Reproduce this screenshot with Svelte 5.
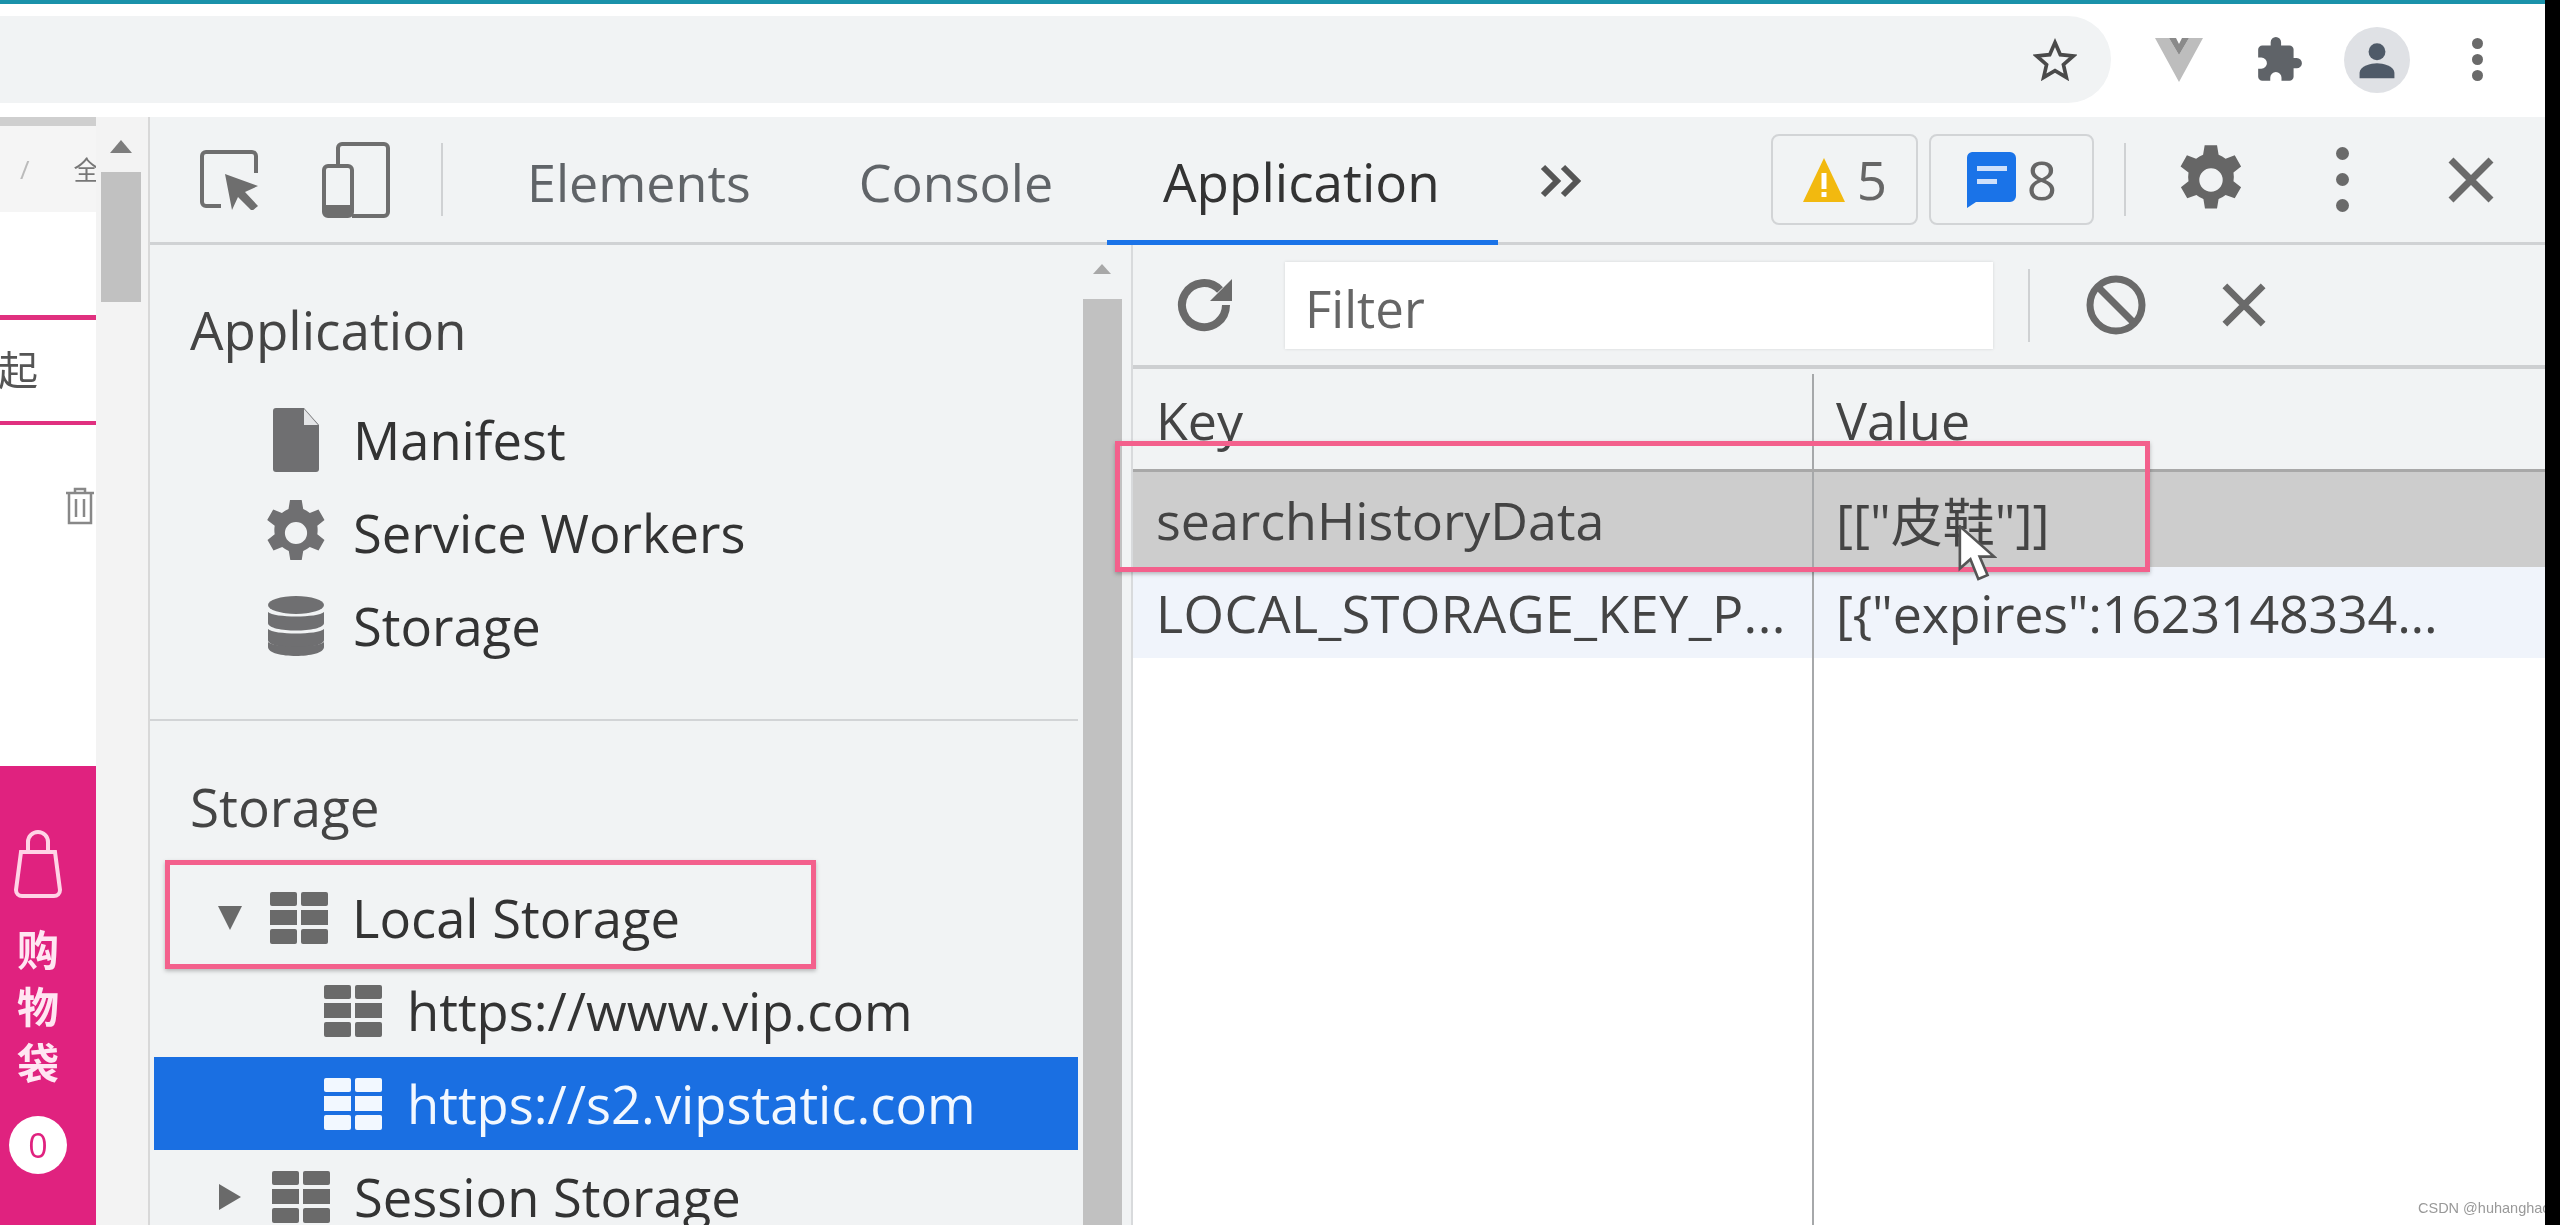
<script>
	const tabs = ['Elements', 'Console', 'Application'];
	const appItems = ['Manifest', 'Service Workers', 'Storage'];
</script>

{#snippet gridIcon()}
	<svg class="grid" viewBox="0 0 58 52">
		<rect x="0" y="0" width="27" height="14" rx="2" />
		<rect x="31" y="0" width="27" height="14" rx="2" />
		<rect x="0" y="18" width="27" height="15" />
		<rect x="31" y="18" width="27" height="15" />
		<rect x="0" y="37" width="27" height="15" rx="2" />
		<rect x="31" y="37" width="27" height="15" rx="2" />
	</svg>
{/snippet}

<div class="screen">
	<div class="window">
		<div class="accent"></div>
		<div class="chrome">
			<div class="omnibox">
				<svg class="star" viewBox="0 0 24 24"><path d="M12 2.500l2.900 6.600 7.100.7-5.400 4.700 1.600 7-6.200-3.700-6.200 3.700 1.600-7L2 9.800l7.100-.7z" /></svg>
			</div>
			<div class="extensions">
				<svg class="vue" viewBox="0 0 48 44">
					<path d="M0 0h14l10 17L34 0h14L24 44z" fill="#bdbdbd" />
					<path d="M14 0h7l3 6 3-6h7L24 17z" fill="#8a8a8a" />
				</svg>
				<svg class="puzzle" viewBox="0 0 24 24"><path d="M20.500 11H19V7a2 2 0 0 0-2-2h-4V3.500a2.500 2.500 0 0 0-5 0V5H4a2 2 0 0 0-2 2v3.800h1.500a2.700 2.700 0 0 1 0 5.400H2V20a2 2 0 0 0 2 2h3.800v-1.500a2.700 2.700 0 0 1 5.400 0V22H17a2 2 0 0 0 2-2v-4h1.500a2.500 2.500 0 0 0 0-5z" /></svg>
				<div class="avatar">
					<svg viewBox="0 0 24 24"><circle cx="12" cy="7.500" r="4.600" /><path d="M2.500 22v-3c0-3.600 6.300-5.200 9.500-5.200s9.500 1.600 9.500 5.200v3z" /></svg>
				</div>
				<div class="dots small"><i></i><i></i><i></i></div>
			</div>
		</div>

		<div class="main">
			<div class="page">
				<div class="page-strip"></div>
				<div class="page-crumbs"><span class="slash">/</span><span class="crumb">全</span></div>
				<div class="page-blank"></div>
				<div class="page-search">
					<span>起</span>
				</div>
				<div class="page-list">
					<svg class="trash" viewBox="0 0 30 38"><path d="M1 6h28M10 6V2h10v4M4 6v30h22V6M11 12v18M19 12v18" /></svg>
				</div>
				<div class="cart">
					<svg class="bag" viewBox="0 0 48 70"><path d="M7 24h34l5 38a6 6 0 0 1-6 6H8a6 6 0 0 1-6-6zM14 24V14a10 10 0 0 1 20 0v10" /></svg>
					<span class="cart-label">购</span>
					<span class="cart-label">物</span>
					<span class="cart-label">袋</span>
					<span class="cart-count">0</span>
				</div>
			</div>

			<div class="page-scroll">
				<span class="arrow up"></span>
				<div class="page-thumb"></div>
			</div>

			<div class="devtools">
				<div class="toolbar">
					<svg class="inspect" viewBox="0 0 60 60">
						<path d="M21 56H6a4 4 0 0 1-4-4V6a4 4 0 0 1 4-4h46a4 4 0 0 1 4 4v17" class="line" />
						<path d="M25 24l33 12-13 6 13 14-6 5-14-14-6 13z" class="solid" />
					</svg>
					<svg class="device" viewBox="0 0 68 76">
						<path d="M16 24V6a4 4 0 0 1 4-4h42a4 4 0 0 1 4 4v64a4 4 0 0 1-4 4H30" class="line" />
						<rect x="2" y="24" width="28" height="50" rx="4" class="line" />
						<rect x="2" y="63" width="28" height="11" class="solid" />
					</svg>
					<div class="sep"></div>
					<div class="tabs">
						{#each tabs as tab}
							<div class="tab" class:active={tab === 'Application'}>{tab}</div>
						{/each}
						<svg class="more" viewBox="0 0 44 36"><path d="M4 4l14 14L4 32M24 4l14 14-14 14" /></svg>
					</div>
					<div class="counters">
						<div class="counter warn">
							<svg viewBox="0 0 44 46">
								<path d="M22 1l21 44H1z" fill="#f2b90f" />
								<rect x="19.500" y="16" width="5" height="16" fill="#fff" />
								<rect x="19.500" y="35" width="5" height="5" fill="#fff" />
							</svg>
							<span>5</span>
						</div>
						<div class="counter msg">
							<svg viewBox="0 0 50 56">
								<path d="M6 0h38a6 6 0 0 1 6 6v38a6 6 0 0 1-6 6H10L1 56V6a6 6 0 0 1 5-6z" fill="#1a73e8" />
								<rect x="11" y="14" width="30" height="5" fill="#cfe0fa" />
								<rect x="11" y="27" width="20" height="5" fill="#cfe0fa" />
							</svg>
							<span>8</span>
						</div>
					</div>
					<div class="sep right"></div>
					<svg class="gear-big" viewBox="0 0 24 24"><path fill-rule="evenodd" d="M13.900 1l.5 3a8.500 8.500 0 0 1 2.200 1.300l2.900-1.100 2 3.500-2.400 1.900a8.500 8.500 0 0 1 0 2.800l2.400 1.900-2 3.500-2.900-1.100a8.500 8.500 0 0 1-2.200 1.300l-.5 3h-3.800l-.5-3a8.500 8.500 0 0 1-2.200-1.300l-2.900 1.100-2-3.500 2.400-1.900a8.500 8.500 0 0 1 0-2.800L2.400 7.700l2-3.500 2.900 1.100a8.500 8.500 0 0 1 2.200-1.300l.5-3zM12 8.300a3.700 3.700 0 1 0 0 7.400 3.700 3.700 0 0 0 0-7.400z" /></svg>
					<div class="dots"><i></i><i></i><i></i></div>
					<svg class="close big" viewBox="0 0 46 46"><path d="M3 3l40 40M43 3L3 43" /></svg>
				</div>

				<div class="panels">
					<aside class="sidebar">
						<h3 class="section first">Application</h3>
						{#each appItems as item}
							<div class="row l1">
								<span class="slot">
									{#if item === 'Manifest'}
										<svg class="doc" viewBox="0 0 46 64"><path d="M3 0h28l15 17v44a3 3 0 0 1-3 3H3a3 3 0 0 1-3-3V3a3 3 0 0 1 3-3z" /><path d="M31 1l14 16H31z" fill="#e4e5e7" /></svg>
									{:else if item === 'Service Workers'}
										<svg class="gear" viewBox="0 0 24 24"><path fill-rule="evenodd" d="M13.900 1l.5 3a8.500 8.500 0 0 1 2.200 1.300l2.900-1.100 2 3.500-2.400 1.900a8.500 8.500 0 0 1 0 2.800l2.400 1.900-2 3.500-2.900-1.100a8.500 8.500 0 0 1-2.200 1.300l-.5 3h-3.800l-.5-3a8.500 8.500 0 0 1-2.200-1.300l-2.900 1.100-2-3.500 2.400-1.900a8.500 8.500 0 0 1 0-2.800L2.400 7.700l2-3.500 2.900 1.100a8.500 8.500 0 0 1 2.200-1.300l.5-3zM12 8.300a3.700 3.700 0 1 0 0 7.400 3.700 3.700 0 0 0 0-7.400z" /></svg>
									{:else}
										<svg class="db" viewBox="0 0 56 60">
											<ellipse cx="28" cy="9" rx="28" ry="9" />
											<path d="M0 16c6 6 50 6 56 0v11c0 10-56 10-56 0z" />
											<path d="M0 33c6 6 50 6 56 0v11c0 10-56 10-56 0z" />
											<path d="M0 46c6 6 50 6 56 0v5c0 12-56 12-56 0z" />
										</svg>
									{/if}
								</span>
								<span>{item}</span>
							</div>
						{/each}
						<div class="divider"></div>
						<h3 class="section">Storage</h3>
						<div class="row l1 marked">
							<span class="tri down"></span>
							<span class="slot">{@render gridIcon()}</span>
							<span>Local Storage</span>
							<div class="callout local"></div>
						</div>
						<div class="row l2">
							<span class="slot">{@render gridIcon()}</span>
							<span>https://www.vip.com</span>
						</div>
						<div class="row l2 selected">
							<span class="slot">{@render gridIcon()}</span>
							<span>https://s2.vipstatic.com</span>
						</div>
						<div class="row l1">
							<span class="tri side"></span>
							<span class="slot">{@render gridIcon()}</span>
							<span>Session Storage</span>
						</div>
					</aside>

					<div class="side-scroll">
						<span class="arrow up small"></span>
						<div class="side-thumb"></div>
					</div>

					<section class="pane">
						<div class="filterbar">
							<svg class="refresh" viewBox="0 0 60 60"><path d="M50 30a22 22 0 1 1-6-15" /><path class="tip" d="M56 4v22H34z" /></svg>
							<div class="filter">Filter</div>
							<div class="sep low"></div>
							<svg class="block" viewBox="0 0 60 60"><circle cx="30" cy="30" r="26" /><path d="M12 12l36 36" /></svg>
							<svg class="close" viewBox="0 0 46 46"><path d="M3 3l40 40M43 3L3 43" /></svg>
						</div>
						<div class="table">
							<div class="tr head"><div class="td key">Key</div><div class="td">Value</div></div>
							<div class="tr picked">
								<div class="td key">searchHistoryData</div>
								<div class="td">[["皮鞋"]]</div>
								<div class="callout keyrow"></div>
								<svg class="cursor" viewBox="0 0 30 44"><path d="M2 1v32l8-7 6 15 7-3-6-14h11z" /></svg>
							</div>
							<div class="tr alt">
								<div class="td key">LOCAL_STORAGE_KEY_P...</div>
								<div class="td">{'[{"expires":1623148334...'}</div>
							</div>
							<div class="rest"><div class="rest-key"></div></div>
						</div>
					</section>
				</div>
			</div>
		</div>
	</div>
	<div class="edge"></div>
	<div class="mark">CSDN @huhanghao</div>
</div>

<style>
	:global(body) {
		margin: 0;
		background: #000;
	}
	.screen {
		position: relative;
		display: flex;
		width: 2560px;
		height: 1225px;
		overflow: hidden;
		font-family: "Open Sans", "Noto Sans CJK SC", sans-serif;
		color: #333;
		background: #fff;
	}
	.window {
		display: flex;
		flex-direction: column;
		flex: 1;
		min-width: 0;
		filter: blur(0.7px);
	}
	.edge {
		width: 15px;
		background: #000;
	}
	.mark {
		position: absolute;
		right: 15px;
		bottom: 9px;
		width: 127px;
		overflow: hidden;
		white-space: nowrap;
		font: 14.5px "Liberation Sans", sans-serif;
		color: #999;
	}

	.accent {
		height: 4px;
		background: #1a92aa;
	}
	.chrome {
		display: flex;
		height: 113px;
		flex: none;
		box-sizing: border-box;
		padding: 12px 0 14px;
		background: #fff;
	}
	.omnibox {
		display: flex;
		align-items: center;
		justify-content: flex-end;
		box-sizing: border-box;
		width: 2111px;
		padding-right: 34px;
		background: #f1f3f4;
		border-radius: 0 43px 43px 0;
	}
	.star {
		width: 44px;
		height: 44px;
		fill: none;
		stroke: #4a4a4a;
		stroke-width: 2;
	}
	.extensions {
		display: flex;
		align-items: center;
		flex: 1;
		padding-left: 44px;
	}
	.vue {
		width: 48px;
		height: 44px;
	}
	.puzzle {
		width: 50px;
		height: 50px;
		margin-left: 51px;
		fill: #5f6368;
	}
	.avatar {
		display: flex;
		align-items: center;
		justify-content: center;
		width: 66px;
		height: 66px;
		margin-left: 40px;
		border-radius: 50%;
		background: #dfe1e5;
	}
	.avatar svg {
		width: 44px;
		height: 44px;
		fill: #4f5a68;
	}
	.dots {
		display: flex;
		flex-direction: column;
		justify-content: space-between;
		width: 13px;
		height: 65px;
		margin-left: 56px;
	}
	.dots i {
		width: 13px;
		height: 13px;
		border-radius: 50%;
		background: #6a6a6a;
	}
	.dots.small {
		width: 11px;
		height: 43px;
		margin-left: 62px;
	}
	.dots.small i {
		width: 11px;
		height: 11px;
	}

	.main {
		display: flex;
		flex: 1;
		min-height: 0;
	}

	.page {
		display: flex;
		flex-direction: column;
		flex: none;
		width: 96px;
		overflow: hidden;
	}
	.page-strip {
		height: 9px;
		background: #cfcfcf;
	}
	.page-crumbs {
		display: flex;
		align-items: center;
		height: 86px;
		padding-left: 20px;
		background: #f5f5f5;
		color: #bbb;
		font-size: 26px;
		white-space: nowrap;
	}
	.crumb {
		margin-left: 44px;
		color: #777;
	}
	.page-blank {
		height: 103px;
		background: #fff;
	}
	.page-search {
		display: flex;
		align-items: center;
		box-sizing: border-box;
		height: 110px;
		border-top: 5px solid #e0307f;
		border-bottom: 4px solid #e0307f;
		font-size: 40px;
		color: #555;
		background: #fff;
	}
	.page-search span {
		margin: -6px 0 0 -2px;
	}
	.page-list {
		height: 341px;
		padding: 62px 0 0 65px;
		box-sizing: border-box;
		background: #fff;
	}
	.trash {
		width: 30px;
		height: 38px;
		fill: none;
		stroke: #888;
		stroke-width: 2.500;
	}
	.cart {
		display: flex;
		flex-direction: column;
		align-items: center;
		flex: 1;
		padding: 62px 20px 0 0;
		background: #e0227f;
		color: #ffe6f2;
	}
	.bag {
		width: 48px;
		height: 70px;
		fill: none;
		stroke: #ffd3e6;
		stroke-width: 4;
	}
	.cart-label {
		height: 56.500px;
		font-size: 42px;
		font-weight: 700;
		line-height: 56px;
	}
	.cart-label:first-of-type {
		margin-top: 24px;
	}
	.cart-count {
		display: flex;
		align-items: center;
		justify-content: center;
		flex: none;
		width: 58px;
		height: 58px;
		margin-top: 24px;
		border-radius: 50%;
		background: #fff;
		color: #e0227f;
		font-size: 34px;
	}

	.page-scroll {
		position: relative;
		flex: none;
		box-sizing: border-box;
		width: 54px;
		padding: 55px 7px 0 5px;
		background: #f3f3f3;
		border-right: 2px solid #d8d8d8;
	}
	.page-thumb {
		height: 130px;
		background: #c1c1c1;
	}
	.arrow.up {
		position: absolute;
		top: 23px;
		left: 14px;
		border-left: 11px solid transparent;
		border-right: 11px solid transparent;
		border-bottom: 13px solid #7d7d7d;
	}

	.devtools {
		display: flex;
		flex-direction: column;
		flex: 1;
		min-width: 0;
		background: #f1f3f4;
	}
	.toolbar {
		display: flex;
		align-items: center;
		flex: none;
		box-sizing: border-box;
		height: 128px;
		padding-left: 50px;
		border-bottom: 3px solid #d0d2d4;
	}
	.line {
		fill: none;
		stroke: #6e6e6e;
		stroke-width: 4;
	}
	.solid {
		fill: #6e6e6e;
		stroke: none;
	}
	.inspect {
		width: 60px;
		height: 60px;
	}
	.device {
		width: 68px;
		height: 76px;
		margin-left: 62px;
	}
	.sep {
		width: 2px;
		height: 73px;
		margin-left: 51px;
		background: #cfd1d3;
	}
	.tabs {
		display: flex;
		align-items: stretch;
		align-self: stretch;
		margin-left: 30px;
		margin-bottom: -3px;
	}
	.tab {
		display: flex;
		align-items: center;
		box-sizing: border-box;
		padding: 6px 54px 0;
		font-size: 52px;
		color: #606468;
		border-bottom: 5px solid transparent;
	}
	.tab.active {
		padding: 6px 58px 0 56px;
		font-size: 53px;
		color: #333;
		border-bottom-color: #1a73e8;
	}
	.more {
		align-self: center;
		width: 44px;
		height: 36px;
		margin-left: 41px;
		fill: none;
		stroke: #555;
		stroke-width: 6;
	}
	.counters {
		display: flex;
		gap: 11px;
		margin-left: auto;
	}
	.counter {
		display: flex;
		align-items: center;
		justify-content: center;
		gap: 11px;
		box-sizing: border-box;
		height: 91px;
		border: 2px solid #d2d4d6;
		border-radius: 8px;
		font-size: 53px;
		color: #666;
	}
	.counter.warn {
		width: 147px;
	}
	.counter.warn svg {
		width: 44px;
		height: 46px;
	}
	.counter.msg {
		width: 165px;
	}
	.counter.msg svg {
		width: 50px;
		height: 56px;
	}
	.sep.right {
		margin-left: 30px;
	}
	.gear-big {
		width: 80px;
		height: 76px;
		margin-left: 45px;
		fill: #666;
	}
	.gear-big + .dots {
		margin-left: 85px;
	}
	.close {
		width: 44px;
		height: 44px;
		fill: none;
		stroke: #6a6a6a;
		stroke-width: 7;
	}
	.close.big {
		width: 46px;
		height: 46px;
		margin: 0 51px 0 99px;
	}

	.panels {
		display: flex;
		flex: 1;
		min-height: 0;
	}
	.sidebar {
		flex: none;
		box-sizing: border-box;
		width: 933px;
		padding-top: 38px;
		padding-right: 5px;
	}
	.section {
		margin: 0;
		height: 93px;
		padding-left: 40px;
		font-size: 53px;
		font-weight: 400;
		line-height: 93px;
		color: #444;
	}
	.section.first {
		margin-bottom: 17px;
	}
	.section:not(.first) {
		margin: 39px 0 18px;
	}
	.row {
		position: relative;
		display: flex;
		align-items: center;
		height: 93px;
		font-size: 52.5px;
		color: #333;
		white-space: nowrap;
	}
	.row.l1 .slot {
		margin-left: 117px;
		margin-right: 28px;
	}
	.row.l1 .tri + .slot {
		margin-left: 0;
		margin-right: 24px;
	}
	.row.l2 {
		padding-left: 174px;
	}
	.slot {
		display: flex;
		align-items: center;
		justify-content: center;
		flex: none;
		width: 58px;
		margin-right: 25px;
	}
	.slot svg {
		flex: none;
	}
	.tri {
		flex: none;
		margin-left: 68px;
		margin-right: 29px;
		width: 0;
		height: 0;
	}
	.tri.down {
		border-left: 12px solid transparent;
		border-right: 12px solid transparent;
		border-top: 24px solid #6a6a6a;
		margin-left: 68px;
		margin-right: 28px;
	}
	.tri.side {
		border-top: 13px solid transparent;
		border-bottom: 13px solid transparent;
		border-left: 22px solid #6a6a6a;
		margin-left: 69px;
		margin-right: 31px;
	}
	.grid {
		width: 58px;
		height: 52px;
		fill: #6a6a6a;
	}
	.doc {
		width: 46px;
		height: 64px;
		fill: #6f6f71;
	}
	.gear {
		width: 76px;
		height: 72px;
		fill: #6f6f71;
	}
	.db {
		width: 56px;
		height: 60px;
		fill: #6f6f71;
	}
	.divider {
		height: 2px;
		margin: 47px 0 0 0;
		background: #d2d4d6;
	}
	.row.selected {
		background: #1a6fe2;
		color: #f2f8ff;
		margin-left: 4px;
		padding-left: 170px;
	}
	.selected .grid {
		fill: #f2f8ff;
	}

	.callout {
		position: absolute;
		z-index: 2;
		box-sizing: border-box;
		border: 5px solid #f3608c;
		box-shadow: 0 2px 4px rgba(0, 0, 0, 0.25);
		pointer-events: none;
	}
	.callout.local {
		left: 15px;
		top: -11px;
		width: 651px;
		height: 109px;
	}

	.side-scroll {
		position: relative;
		flex: none;
		box-sizing: border-box;
		width: 50px;
		padding-top: 54px;
		border-right: 2px solid #d8dadc;
		background: #f1f3f4;
	}
	.side-thumb {
		width: 39px;
		height: 100%;
		background: #c1c1c1;
	}
	.arrow.small {
		top: 19px;
		left: 10px;
		border-left-width: 9px;
		border-right-width: 9px;
		border-bottom-width: 10px;
		border-bottom-color: #a8a8a8;
	}

	.pane {
		display: flex;
		flex-direction: column;
		flex: 1;
		min-width: 0;
	}
	.filterbar {
		display: flex;
		align-items: center;
		flex: none;
		box-sizing: border-box;
		height: 124px;
		padding-left: 43px;
		border-bottom: 4px solid #cdcfd1;
	}
	.refresh {
		width: 60px;
		height: 60px;
		fill: none;
		stroke: #6a6a6a;
		stroke-width: 8;
	}
	.refresh .tip {
		fill: #6a6a6a;
		stroke: none;
	}
	.filter {
		box-sizing: border-box;
		width: 708px;
		height: 87px;
		margin-left: 49px;
		padding-left: 20px;
		background: #fff;
		box-shadow: 0 0 3px rgba(0, 0, 0, 0.12);
		font-size: 51px;
		line-height: 92px;
		color: #666;
	}
	.sep.low {
		margin-left: 35px;
	}
	.block {
		width: 60px;
		height: 60px;
		margin-left: 56px;
		fill: none;
		stroke: #6a6a6a;
		stroke-width: 7;
	}
	.block + .close {
		margin-left: 76px;
	}

	.table {
		display: flex;
		flex-direction: column;
		flex: 1;
		background: #fff;
	}
	.tr {
		position: relative;
		display: flex;
		flex: none;
		font-size: 52px;
		white-space: nowrap;
		color: #444;
	}
	.td {
		box-sizing: border-box;
		padding-left: 22px;
		display: flex;
		align-items: center;
		flex: 1;
		min-width: 0;
	}
	.td.key {
		flex: none;
		width: 681px;
		padding-left: 23px;
		border-right: 2px solid #a6a8aa;
	}
	.head {
		height: 95px;
		padding-top: 5px;
		background: #f1f3f4;
		border-bottom: 3px solid #a8a8a8;
	}
	.head .td {
		padding-bottom: 4px;
	}
	.picked {
		height: 95px;
		background: #cdcdcd;
	}
	.alt {
		height: 91px;
		background: #f0f4fb;
	}
	.alt .td.key {
		letter-spacing: 0.45px;
	}
	.alt .td:last-child {
		letter-spacing: -0.2px;
	}
	.rest {
		flex: 1;
	}
	.rest-key {
		width: 681px;
		height: 100%;
		box-sizing: border-box;
		border-right: 2px solid #a6a8aa;
	}
	.callout.keyrow {
		left: -18px;
		top: -31px;
		width: 1035px;
		height: 131px;
	}
	.cursor {
		position: absolute;
		z-index: 3;
		left: 824px;
		top: 53px;
		width: 40px;
		height: 58px;
		fill: #fff;
		stroke: #555;
		stroke-width: 2;
	}
</style>
